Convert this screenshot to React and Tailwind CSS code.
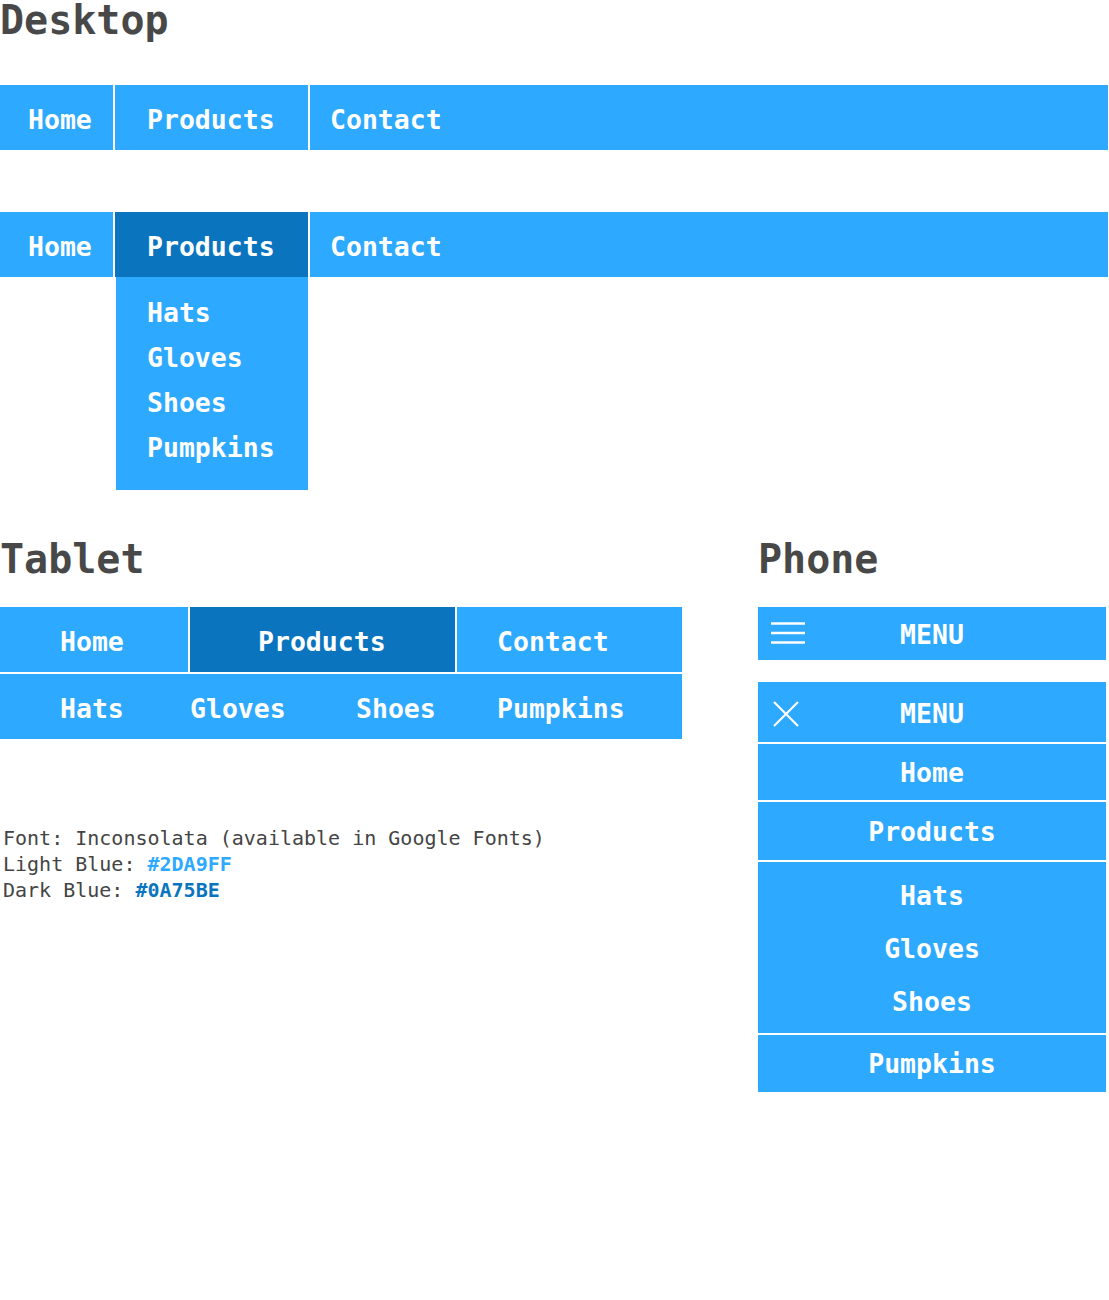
import React from "react";

const mono = { fontFamily: "'DejaVu Sans Mono', 'Liberation Mono', monospace" };

const Heading = ({ children }) => (
  <h2 className="text-[40px] leading-[40px] font-bold text-[#484848]">{children}</h2>
);

const DesktopNav = ({ open }) => (
  <div>
    <div className="flex gap-[2px] h-[65px] w-[1108px] text-[26.5px] font-bold text-white">
      <div className="w-[113px] bg-[#2DA9FF] flex items-center pt-[4px] pl-[28px]">Home</div>
      <div
        className={`w-[193px] flex items-center pt-[4px] pl-[32px] ${
          open ? "bg-[#0A75BE]" : "bg-[#2DA9FF]"
        }`}
      >
        Products
      </div>
      <div className="flex-1 bg-[#2DA9FF] flex items-center pt-[4px] pl-[20px]">Contact</div>
    </div>
    {open && (
      <div className="ml-[116px] w-[192px] bg-[#2DA9FF] pt-[13px] pb-[20px] text-[26.5px] font-bold text-white">
        {["Hats", "Gloves", "Shoes", "Pumpkins"].map((item) => (
          <div key={item} className="h-[45px] flex items-center pl-[31px]">
            {item}
          </div>
        ))}
      </div>
    )}
  </div>
);

const TabletNav = () => (
  <div className="w-[682px] flex flex-col gap-[2px] text-[26.5px] font-bold text-white">
    <div className="flex gap-[2px] h-[65px]">
      <div className="w-[188px] bg-[#2DA9FF] flex items-center pt-[4px] pl-[60px]">Home</div>
      <div className="w-[265px] bg-[#0A75BE] flex items-center pt-[4px] pl-[68px]">Products</div>
      <div className="flex-1 bg-[#2DA9FF] flex items-center pt-[4px] pl-[40px]">Contact</div>
    </div>
    <div className="flex h-[65px] bg-[#2DA9FF] pt-[4px]">
      <div className="w-[190px] flex items-center pl-[60px]">Hats</div>
      <div className="w-[166px] flex items-center">Gloves</div>
      <div className="w-[141px] flex items-center">Shoes</div>
      <div className="flex-1 flex items-center">Pumpkins</div>
    </div>
  </div>
);

const Hamburger = () => (
  <svg width="34" height="23" viewBox="0 0 34 23" fill="none" stroke="white" strokeWidth="2.6">
    <line x1="0" y1="1.5" x2="34" y2="1.5" />
    <line x1="0" y1="11" x2="34" y2="11" />
    <line x1="0" y1="20.5" x2="34" y2="20.5" />
  </svg>
);

const Close = () => (
  <svg width="26" height="26" viewBox="0 0 26 26" fill="none" stroke="white" strokeWidth="2.2">
    <line x1="1" y1="1" x2="25" y2="25" />
    <line x1="25" y1="1" x2="1" y2="25" />
  </svg>
);

const PhoneBar = ({ icon, height, pad, textPad }) => (
  <div className={`grid grid-cols-[1fr_auto_1fr] items-center bg-[#2DA9FF] ${height}`}>
    <div className={pad}>{icon}</div>
    <div className={textPad}>MENU</div>
    <div />
  </div>
);

const PhoneNav = () => (
  <div className="w-[348px] text-[26.5px] font-bold text-white">
    <PhoneBar icon={<Hamburger />} height="h-[53px]" pad="pl-[13px] flex" textPad="pt-[2px]" />
    <div className="mt-[22px] flex flex-col gap-[2px] text-center">
      <PhoneBar icon={<Close />} height="h-[60px]" pad="pl-[15px] flex pt-[4px]" textPad="pt-[4px]" />
      <div className="h-[56px] bg-[#2DA9FF] flex items-center justify-center pt-[1px]">Home</div>
      <div className="h-[58px] bg-[#2DA9FF] flex items-center justify-center pt-[2px]">Products</div>
      <div className="bg-[#2DA9FF] pt-[7px] pb-[5px]">
        {["Hats", "Gloves", "Shoes"].map((item) => (
          <div key={item} className="h-[53px] flex items-center justify-center">
            {item}
          </div>
        ))}
      </div>
      <div className="h-[57px] bg-[#2DA9FF] flex items-center justify-center pt-[1px]">Pumpkins</div>
    </div>
  </div>
);

export default function App() {
  return (
    <div className="bg-white min-h-[1300px] w-[1109px]" style={mono}>
      {/* Desktop */}
      <Heading>Desktop</Heading>
      <div className="mt-[45px]">
        <DesktopNav />
      </div>
      <div className="mt-[62px]">
        <DesktopNav open />
      </div>

      {/* Tablet + Phone */}
      <div className="flex gap-[76px] mt-[49px]">
        <div className="w-[682px]">
          <Heading>Tablet</Heading>
          <div className="mt-[28px]">
            <TabletNav />
          </div>
          <div className="mt-[86px] pl-[3px] text-[20px] leading-[26px] text-[#444]">
            <div>Font: Inconsolata (available in Google Fonts)</div>
            <div>
              Light Blue: <span className="font-bold text-[#2DA9FF]">#2DA9FF</span>
            </div>
            <div>
              Dark Blue: <span className="font-bold text-[#0A75BE]">#0A75BE</span>
            </div>
          </div>
        </div>
        <div>
          <Heading>Phone</Heading>
          <div className="mt-[28px]">
            <PhoneNav />
          </div>
        </div>
      </div>
    </div>
  );
}
